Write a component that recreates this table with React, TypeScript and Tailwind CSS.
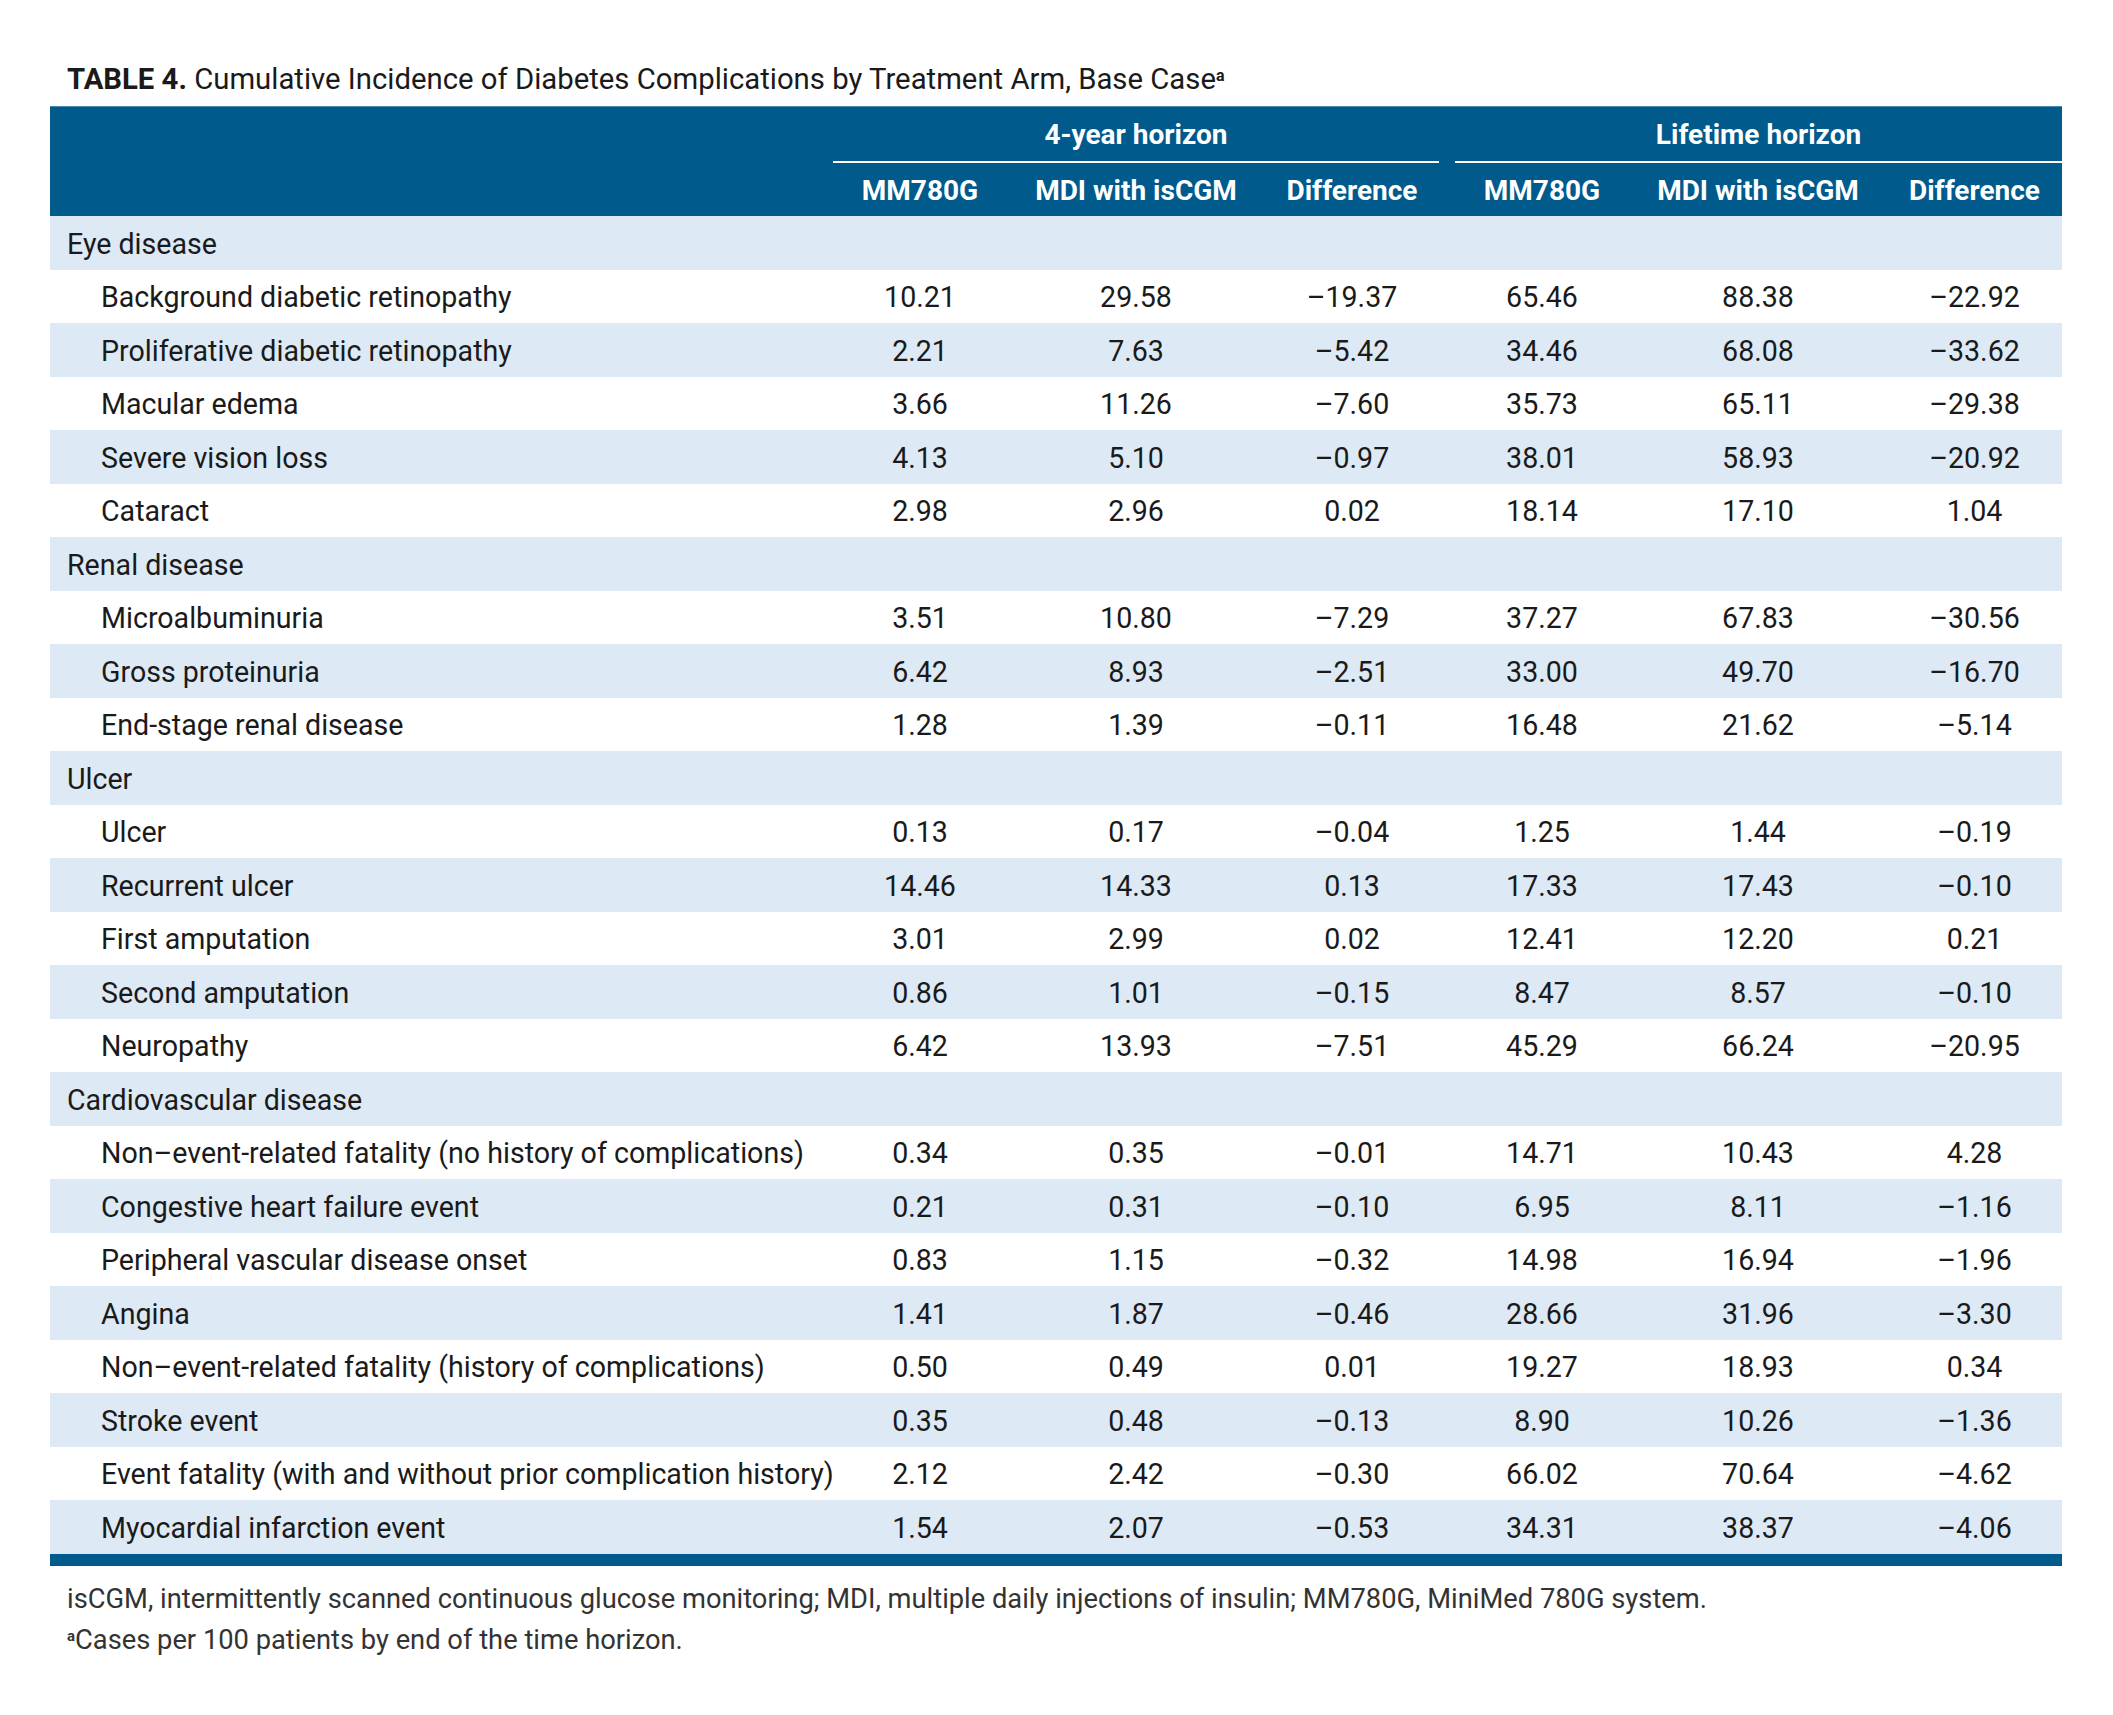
import React from 'react'

type Row = {
  label: string
  group?: boolean
  values?: string[]
}

const rows: Row[] = [
  { label: 'Eye disease', group: true },
  { label: 'Background diabetic retinopathy', values: ['10.21', '29.58', '–19.37', '65.46', '88.38', '–22.92'] },
  { label: 'Proliferative diabetic retinopathy', values: ['2.21', '7.63', '–5.42', '34.46', '68.08', '–33.62'] },
  { label: 'Macular edema', values: ['3.66', '11.26', '–7.60', '35.73', '65.11', '–29.38'] },
  { label: 'Severe vision loss', values: ['4.13', '5.10', '–0.97', '38.01', '58.93', '–20.92'] },
  { label: 'Cataract', values: ['2.98', '2.96', '0.02', '18.14', '17.10', '1.04'] },
  { label: 'Renal disease', group: true },
  { label: 'Microalbuminuria', values: ['3.51', '10.80', '–7.29', '37.27', '67.83', '–30.56'] },
  { label: 'Gross proteinuria', values: ['6.42', '8.93', '–2.51', '33.00', '49.70', '–16.70'] },
  { label: 'End-stage renal disease', values: ['1.28', '1.39', '–0.11', '16.48', '21.62', '–5.14'] },
  { label: 'Ulcer', group: true },
  { label: 'Ulcer', values: ['0.13', '0.17', '–0.04', '1.25', '1.44', '–0.19'] },
  { label: 'Recurrent ulcer', values: ['14.46', '14.33', '0.13', '17.33', '17.43', '–0.10'] },
  { label: 'First amputation', values: ['3.01', '2.99', '0.02', '12.41', '12.20', '0.21'] },
  { label: 'Second amputation', values: ['0.86', '1.01', '–0.15', '8.47', '8.57', '–0.10'] },
  { label: 'Neuropathy', values: ['6.42', '13.93', '–7.51', '45.29', '66.24', '–20.95'] },
  { label: 'Cardiovascular disease', group: true },
  { label: 'Non–event-related fatality (no history of complications)', values: ['0.34', '0.35', '–0.01', '14.71', '10.43', '4.28'] },
  { label: 'Congestive heart failure event', values: ['0.21', '0.31', '–0.10', '6.95', '8.11', '–1.16'] },
  { label: 'Peripheral vascular disease onset', values: ['0.83', '1.15', '–0.32', '14.98', '16.94', '–1.96'] },
  { label: 'Angina', values: ['1.41', '1.87', '–0.46', '28.66', '31.96', '–3.30'] },
  { label: 'Non–event-related fatality (history of complications)', values: ['0.50', '0.49', '0.01', '19.27', '18.93', '0.34'] },
  { label: 'Stroke event', values: ['0.35', '0.48', '–0.13', '8.90', '10.26', '–1.36'] },
  { label: 'Event fatality (with and without prior complication history)', values: ['2.12', '2.42', '–0.30', '66.02', '70.64', '–4.62'] },
  { label: 'Myocardial infarction event', values: ['1.54', '2.07', '–0.53', '34.31', '38.37', '–4.06'] },
]

const gridCols = 'grid grid-cols-[783px_174px_258px_174px_16px_174px_258px_175px]'

const App: React.FC = () => {
  const font = { fontFamily: 'Roboto, "Noto Sans", sans-serif' }

  return (
    <div className="w-[2113px] min-h-[1715px] bg-white text-[#1a1a1a]" style={font}>
      <div className="pl-[50px] pt-[60px] w-[2062px]">
        <h1 className="text-[29.3px] leading-[36px] pl-[17px] mb-[9px] pt-[1px]">
          <span className="font-bold">TABLE 4.</span> Cumulative Incidence of Diabetes Complications by Treatment Arm, Base Case
          <sup className="text-[16px] font-bold">a</sup>
        </h1>

        {/* header */}
        <div className="bg-[#005a8c] text-white font-bold text-[28px] border-t border-[#4d8ab0]">
          <div className={`${gridCols} h-[54px] items-center pt-[1px]`}>
            <div />
            <div className="col-span-3 text-center">4-year horizon</div>
            <div />
            <div className="col-span-3 text-center">Lifetime horizon</div>
          </div>
          <div className={`${gridCols} h-[2px]`}>
            <div />
            <div className="col-span-3 bg-white" />
            <div />
            <div className="col-span-3 bg-white" />
          </div>
          <div className={`${gridCols} h-[53px] items-center pt-[2px]`}>
            <div />
            <div className="text-center">MM780G</div>
            <div className="text-center">MDI with isCGM</div>
            <div className="text-center">Difference</div>
            <div />
            <div className="text-center">MM780G</div>
            <div className="text-center">MDI with isCGM</div>
            <div className="text-center">Difference</div>
          </div>
        </div>

        {/* body */}
        <div className="text-[28.6px]">
          {rows.map((r, i) => (
            <div
              key={i}
              className={`${gridCols} h-[53.5px] items-center pt-[3px] ${i % 2 === 0 ? 'bg-[#dde9f5]' : 'bg-white'}`}
            >
              <div className={`whitespace-nowrap ${r.group ? 'pl-[17px]' : 'pl-[51px]'}`}>{r.label}</div>
              {r.values && (
                <>
                  <div className="text-center">{r.values[0]}</div>
                  <div className="text-center">{r.values[1]}</div>
                  <div className="text-center">{r.values[2]}</div>
                  <div />
                  <div className="text-center">{r.values[3]}</div>
                  <div className="text-center">{r.values[4]}</div>
                  <div className="text-center">{r.values[5]}</div>
                </>
              )}
            </div>
          ))}
        </div>
        <div className="h-[12px] bg-[#005a8c]" />

        <div className="pl-[17px] pt-[13px] text-[27.3px] leading-[41px] text-[#333]">
          <p>isCGM, intermittently scanned continuous glucose monitoring; MDI, multiple daily injections of insulin; MM780G, MiniMed 780G system.</p>
          <p>
            <sup className="text-[15px] font-bold">a</sup>Cases per 100 patients by end of the time horizon.
          </p>
        </div>
      </div>
    </div>
  )
}

export default App
